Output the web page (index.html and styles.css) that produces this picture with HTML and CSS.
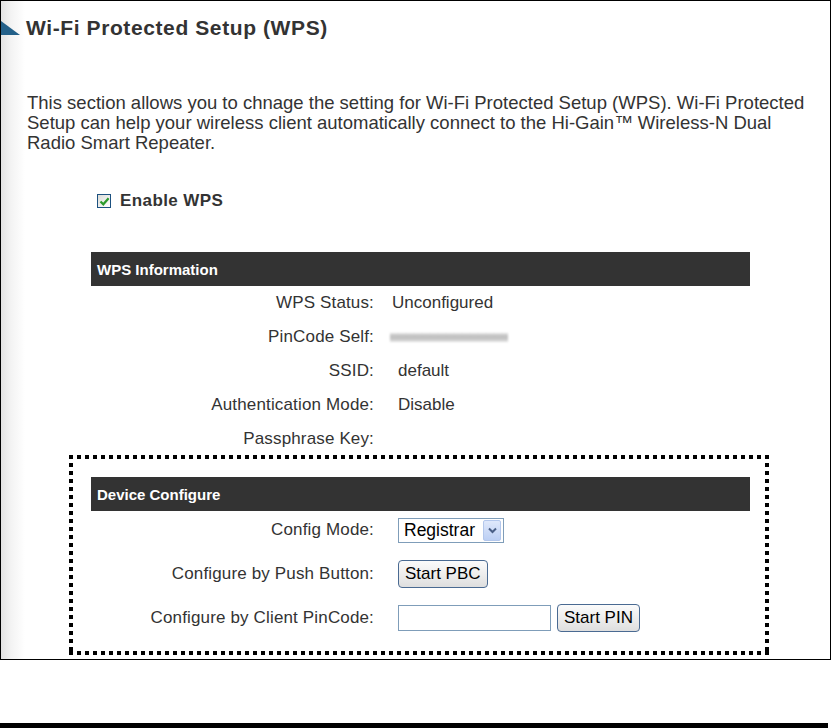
FILE: index.html
```html
<!DOCTYPE html>
<html lang="en">
<head>
<meta charset="utf-8">
<title>Wi-Fi Protected Setup (WPS)</title>
<link rel="stylesheet" href="styles.css">
</head>
<body>
<div class="frame">
  <div class="header">
    <span class="tri"></span>
    <h1>Wi-Fi Protected Setup (WPS)</h1>
  </div>
  <p class="intro">This section allows you to chnage the setting for Wi-Fi Protected Setup (WPS). Wi-Fi Protected<br>Setup can help your wireless client automatically connect to the Hi-Gain™ Wireless-N Dual<br>Radio Smart Repeater.</p>
  <div class="enable">
    <span class="cb"><svg width="11" height="11" viewBox="0 0 11 11"><path d="M1.5 5.5 L4.3 8.3 L9.6 2.2" fill="none" stroke="#2c9b2c" stroke-width="2.2"/></svg></span>
    <span>Enable WPS</span>
  </div>
  <div class="section">
    <div class="bar">WPS Information</div>
    <div class="rows info">
      <div class="lbl">WPS Status:</div><div class="val">Unconfigured</div>
      <div class="lbl">PinCode Self:</div><div class="val"><span class="blur"></span></div>
      <div class="lbl">SSID:</div><div class="val shift">default</div>
      <div class="lbl">Authentication Mode:</div><div class="val shift">Disable</div>
      <div class="lbl">Passphrase Key:</div><div class="val"></div>
    </div>
  </div>
  <div class="dotted">
    <div class="bar">Device Configure</div>
    <div class="rows config">
      <div class="lbl">Config Mode:</div>
      <div class="val"><div class="select"><span>Registrar</span><span class="arrow"><svg width="9" height="7" viewBox="0 0 9 7"><path d="M1 1.5 L4.5 5 L8 1.5" fill="none" stroke="#4a5f86" stroke-width="2"/></svg></span></div></div>
      <div class="lbl">Configure by Push Button:</div>
      <div class="val"><button class="btn" type="button">Start PBC</button></div>
      <div class="lbl">Configure by Client PinCode:</div>
      <div class="val"><input class="pin" type="text"><button class="btn" type="button">Start PIN</button></div>
    </div>
  </div>
</div>
<div class="rule"></div>
</body>
</html>
```

FILE: styles.css
```css
html, body {
  margin: 0;
  padding: 0;
  background: #fff;
}
body {
  font-family: "Liberation Sans", Arial, sans-serif;
  color: #333;
}
.frame {
  width: 831px;
  height: 660px;
  box-sizing: border-box;
  border: 1px solid #000;
  background: linear-gradient(to right, #e2e2e2 0, #f3f3f3 10px, #fff 24px);
  overflow: hidden;
}
.header {
  display: flex;
  margin-top: 15px;
  height: 24px;
}
.tri {
  width: 19px;
  height: 14px;
  margin-top: 5px;
  background: #236089;
  clip-path: polygon(0 0, 0 100%, 100% 100%);
  flex: none;
}
.header h1 {
  margin: 0 0 0 6px;
  font-size: 21px;
  line-height: 24px;
  font-weight: bold;
  letter-spacing: 0.6px;
  color: #333;
}
.intro {
  margin: 53px 0 0 26px;
  font-size: 18.5px;
  line-height: 20px;
  white-space: nowrap;
  color: #333;
}
.enable {
  display: flex;
  align-items: center;
  height: 20px;
  margin: 38px 0 0 96px;
  gap: 9px;
  font-size: 17px;
  font-weight: bold;
  letter-spacing: 0.4px;
}
.cb {
  width: 14px;
  height: 14px;
  box-sizing: border-box;
  border: 1px solid #1c5180;
  background: linear-gradient(135deg, #dcdcd7, #fff);
  display: flex;
  align-items: center;
  justify-content: center;
}
.section {
  margin: 41px 0 0 90px;
  width: 659px;
}
.bar {
  height: 34px;
  background: #333;
  color: #fff;
  font-size: 15px;
  font-weight: bold;
  display: flex;
  align-items: center;
  padding-left: 6px;
}
.rows {
  display: grid;
  grid-template-columns: 283px 1fr;
  font-size: 17px;
}
.info {
  grid-auto-rows: 34px;
  column-gap: 18px;
  align-items: center;
}
.lbl {
  text-align: right;
  white-space: nowrap;
  letter-spacing: 0.15px;
}
.val {
  display: flex;
  align-items: center;
  white-space: nowrap;
}
.shift {
  padding-left: 6px;
}
.blur {
  width: 118px;
  height: 9px;
  margin-left: -2px;
  background: linear-gradient(#e2e2e2, #bdbdbd 40%, #c9c9c9 70%, #e6e6e6);
  filter: blur(0.8px);
}
.dotted {
  margin: -1px 0 0 68px;
  width: 700px;
  box-sizing: border-box;
  padding: 22px 19px 23px 22px;
  background:
    linear-gradient(to right, #000 50%, transparent 0) left top / 8px 4px repeat-x,
    linear-gradient(to right, #000 50%, transparent 0) left bottom / 8px 4px repeat-x,
    linear-gradient(to bottom, #000 50%, transparent 0) left top / 4px 8px repeat-y,
    linear-gradient(to bottom, #000 50%, transparent 0) right top / 4px 8px repeat-y;
}
.config {
  grid-auto-rows: 28px;
  row-gap: 16px;
  column-gap: 24px;
  align-items: center;
  padding-top: 5px;
}
.select {
  width: 106px;
  height: 25px;
  box-sizing: border-box;
  border: 1px solid #7f9db9;
  background: #fff;
  display: flex;
  align-items: center;
  justify-content: space-between;
  padding: 0 2px 0 5px;
  color: #000;
  font-size: 17.5px;
}
.arrow {
  width: 18px;
  height: 21px;
  box-sizing: border-box;
  border: 1px solid #b3c7ec;
  border-radius: 2px;
  background: linear-gradient(#dfe8fb, #bccff4);
  display: flex;
  align-items: center;
  justify-content: center;
}
.btn {
  height: 28px;
  box-sizing: border-box;
  margin: 0;
  padding: 0 6px;
  border: 1px solid #4a6a92;
  border-radius: 4px;
  background: linear-gradient(#fbfbfb, #ececec 55%, #dedede);
  font-family: "Liberation Sans", Arial, sans-serif;
  font-size: 17px;
  letter-spacing: 0;
  color: #000;
}
.pin {
  width: 153px;
  height: 26px;
  box-sizing: border-box;
  margin: 0 6px 0 0;
  border: 1px solid #7f9db9;
  padding: 0;
  background: #fff;
}
.rule {
  width: 828px;
  height: 5px;
  margin-top: 63px;
  background: #000;
}
```
